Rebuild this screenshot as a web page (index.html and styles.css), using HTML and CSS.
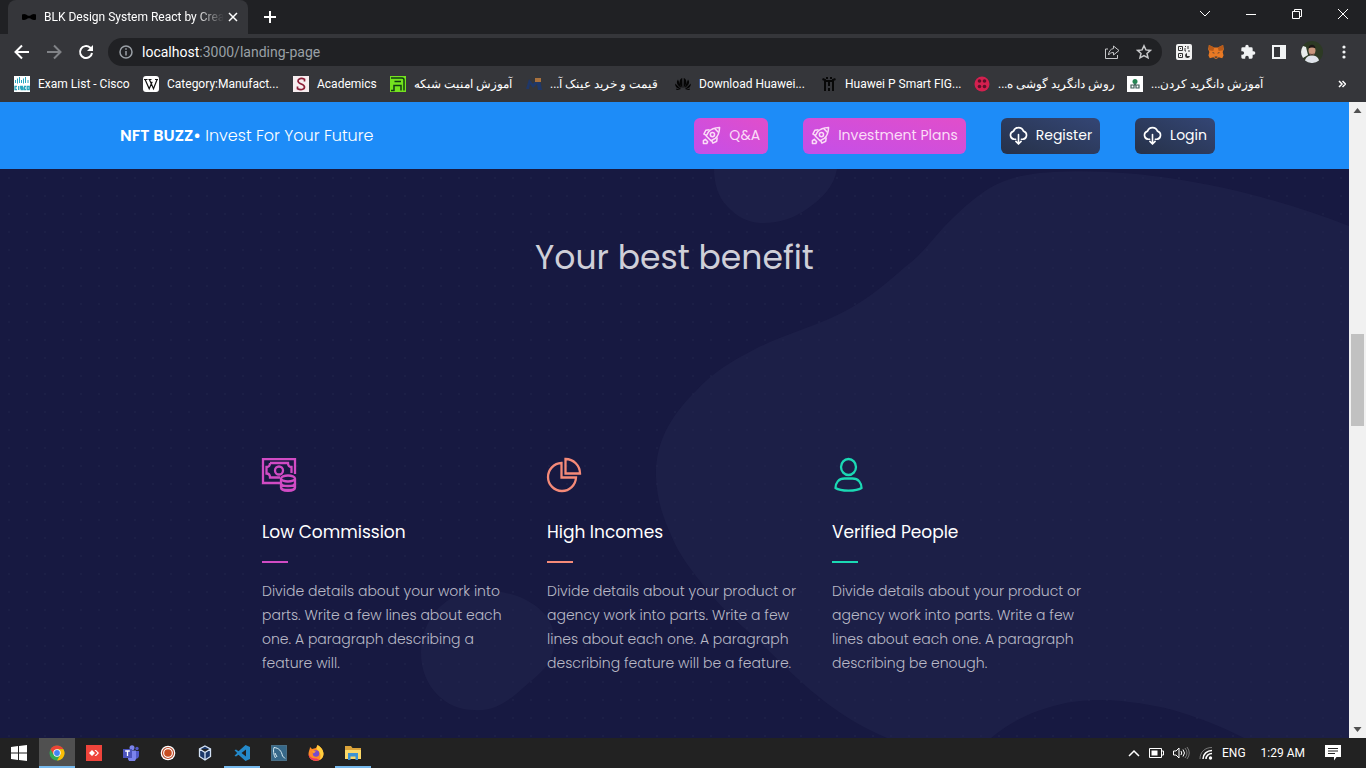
FILE: index.html
```html
<!DOCTYPE html>
<html lang="en">
<head>
<meta charset="utf-8">
<title>BLK Design System React by Creative Tim</title>
<link rel="stylesheet" href="styles.css">
</head>
<body>
<svg class="defs" aria-hidden="true">
  <symbol id="spaceship" viewBox="0 0 20 20"><g fill="none" stroke="currentColor" stroke-width="1.6" stroke-linejoin="round"><path d="M18.500 1.500C13 1.700 9.500 3 7 6L4.500 10.500l5 5L14 13c3-2.500 4.300-6 4.500-11.500z"/><path d="M8 4L4 4.500 2 8.500l3 1.500M16 12l-.5 4L11.500 18 10 15M13.500 2.800l3.700 3.700"/><circle cx="11" cy="9" r="2.200"/><path d="M1.500 15.500l2-1.500 2.500 2.500-1 2H1.500z"/></g></symbol>
  <symbol id="cloud" viewBox="0 0 20 20"><g fill="none" stroke="currentColor" stroke-width="1.700" stroke-linecap="round" stroke-linejoin="round"><path d="M7 14H5.300a4.400 4.400 0 0 1-.5-8.600 5.500 5.500 0 0 1 10.400 0 4.400 4.400 0 0 1-.5 8.600H13M10 9V19M7.300 16.200L10 19l2.700-2.800"/></g></symbol>
</svg>

<header class="browser">
  <div class="tabstrip">
    <div class="tab">
      <svg class="bow" viewBox="0 0 14 8"><path d="M0 1.500Q3 0 6 2.800H8Q11 0 14 1.500V6.500Q11 8 8 5.200H6Q3 8 0 6.500Z"/></svg>
      <span class="tab-title">BLK Design System React by Crea</span>
      <button class="plain" aria-label="Close tab"><svg width="10" height="10" viewBox="0 0 10 10"><path class="ln15" d="M1 1l8 8M9 1L1 9"/></svg></button>
    </div>
    <button class="plain new-tab" aria-label="New tab"><svg width="12" height="12" viewBox="0 0 12 12"><path class="ln2" d="M6 0v12M0 6h12"/></svg></button>
    <div class="window-buttons">
      <button class="plain" aria-label="Search tabs"><svg width="12" height="12" viewBox="0 0 12 12"><path class="ln" d="M1 3l5 5 5-5"/></svg></button>
      <button class="plain" aria-label="Minimize"><svg width="12" height="12" viewBox="0 0 12 12"><path class="ln" d="M1 6.500h10"/></svg></button>
      <button class="plain" aria-label="Restore"><svg width="12" height="12" viewBox="0 0 12 12"><path class="ln" d="M1.500 3.500h7v7h-7zM3.500 3.500v-2h7v7h-2"/></svg></button>
      <button class="plain" aria-label="Close"><svg width="12" height="12" viewBox="0 0 12 12"><path class="ln" d="M1 1l10 10M11 1L1 11"/></svg></button>
    </div>
  </div>

  <div class="toolbar">
    <button class="plain" aria-label="Back"><svg width="16" height="16" viewBox="0 0 16 16"><path class="ln2" d="M15 8H2M8 1.500L1.500 8 8 14.500"/></svg></button>
    <button class="plain dim" aria-label="Forward"><svg width="16" height="16" viewBox="0 0 16 16"><path class="ln2" d="M1 8h13M8 1.500L14.500 8 8 14.500"/></svg></button>
    <button class="plain" aria-label="Reload"><svg width="16" height="16" viewBox="0 0 16 16"><path class="ln2" d="M14 9a6 6 0 1 1-2-5.500L14 5.500"/><path fill="currentColor" d="M15 1v6H9z"/></svg></button>
    <div class="omnibox">
      <svg class="info" width="14" height="14" viewBox="0 0 14 14"><circle class="ln15" cx="7" cy="7" r="6"/><path class="ln15" d="M7 6v4.500M7 3.200v1.500"/></svg>
      <span class="url"><b>localhost</b>:3000/landing-page</span>
      <button class="plain soft" aria-label="Share"><svg width="16" height="16" viewBox="0 0 16 16"><path class="ln" d="M4 5H1.500v9.500h12V11M9.500 2l5.500 4.500L9.500 11V8.500C7 8.500 5.500 9.500 4.500 11 4.700 7.500 6.500 5 9.500 4.500z"/></svg></button>
      <button class="plain soft" aria-label="Bookmark"><svg width="16" height="16" viewBox="0 0 16 16"><path class="ln15" d="M8 1.800l1.900 4.100 4.500.5-3.400 3 1 4.400L8 11.500l-4 2.300 1-4.400-3.400-3 4.500-.5z"/></svg></button>
    </div>
    <div class="extensions">
      <svg width="16" height="16" viewBox="0 0 16 16"><rect width="16" height="16" rx="2" fill="#f1f1f1"/><path fill="none" stroke="#333" d="M2.500 2.500h4v4h-4zM2.500 9.500h4v4h-4zM9 2.500h1M12 2v3M9 4v3h1M12 7h2"/><path fill="#333" d="M4 4h1v1H4zM4 11h1v1H4zM11 9a2.500 2.500 0 1 0 3 3h-3z"/></svg>
      <svg width="16" height="16" viewBox="0 0 18 16"><path fill="#e87924" d="M1 0l6 3h4l6-3 .8 5-1.300 3 1 4-1.500 3-4-1-2 1.500H8L6 14l-4 1-1.500-3 1-4L.2 5z"/><path fill="#b85a18" d="M1 0l6 3-1 4-5-1zM17 0l-6 3 1 4 5-1z"/><path fill="#30363b" d="M5 8l3 1.500H5.500zM13 8l-3 1.500h2.500zM7.500 13h3v1.500h-3z"/></svg>
      <svg width="16" height="16" viewBox="0 0 24 24"><path fill="currentColor" d="M20.500 11H19V7a2 2 0 0 0-2-2h-4V3.500a2.500 2.500 0 0 0-5 0V5H4a2 2 0 0 0-2 2v3.800h1.500a2.700 2.700 0 0 1 0 5.400H2V20a2 2 0 0 0 2 2h3.800v-1.500a2.700 2.700 0 0 1 5.400 0V22H17a2 2 0 0 0 2-2v-4h1.500a2.500 2.500 0 0 0 0-5z"/></svg>
      <svg width="14" height="14" viewBox="0 0 14 14"><path fill="currentColor" fill-rule="evenodd" d="M0 0h14v14H0zM2 2v10h6V2z"/></svg>
      <svg class="avatar" width="22" height="22" viewBox="0 0 22 22"><circle cx="11" cy="11" r="11" fill="#2d3a24"/><path fill="#e8eceb" d="M2 5a11 11 0 0 0 0 12l5-3-2-8z"/><path fill="#dfe3ea" d="M4 19.500c1-4 4-5 7-5s6 1 7 5a11 11 0 0 1-14 0z"/><ellipse cx="11" cy="9.500" rx="3.500" ry="4.800" fill="#c9967d"/><path fill="#1c1715" d="M7.500 7.500c0-5 7-5 7 0-2-1.500-5-1.500-7 0z"/><path fill="#5c4238" d="M8.500 12.500c1.500.6 3.500.6 5 0-.5 2.200-4.500 2.200-5 0z"/></svg>
      <svg width="4" height="14" viewBox="0 0 4 14"><g fill="currentColor"><circle cx="2" cy="2" r="1.600"/><circle cx="2" cy="7" r="1.600"/><circle cx="2" cy="12" r="1.600"/></g></svg>
    </div>
  </div>

  <nav class="bookmarks" aria-label="Bookmarks">
    <a href="#"><svg viewBox="0 0 16 16"><path fill="#fff" d="M0 0h16v16H0z"/><path stroke="#27a5bd" d="M1.500 4v3M3.500 2.500v5M5.500 1v6M7.500 4v3M9.500 2.500v5M11.500 1v6M14 4v3"/><path fill="none" stroke="#27a5bd" stroke-width="1.300" d="M3 10.500H1v3h2M4.700 10v4M9 10.500H6.700V12H9v1.500H6.500M12 10.500h-1.500v3H12M13.200 10.500h2v3h-2z"/></svg><span>Exam List - Cisco</span></a>
    <a href="#"><svg viewBox="0 0 16 16"><rect width="16" height="16" rx="3" fill="#fff"/><path fill="none" stroke="#111" stroke-width="1.200" d="M2.200 3.700l4 9 3-7M6.500 3.700l4 9 3.500-9M1 3.500h3.500M5.500 3.500h3M12 3.500h3"/></svg><span>Category:Manufact...</span></a>
    <a href="#"><svg viewBox="0 0 16 16"><path fill="#f7edef" d="M0 0h16v16H0z"/><path fill="none" stroke="#8c1d35" stroke-width="1.700" d="M11.500 5.500V3.200C8.500 1.800 5 2.500 5 5c0 3.500 6.500 2.500 6.500 6 0 2.800-4 3.200-7 1.800V10.500"/></svg><span>Academics</span></a>
    <a href="#"><svg viewBox="0 0 16 16"><path fill="#74e31f" d="M0 0h16v16H0z"/><path fill="none" stroke="#103c13" stroke-width="1.500" d="M1 2h11q2 0 2 2v10.500M1 14.500h3V9.500h7v5M4.500 5.500H11"/></svg><span dir="rtl">آموزش امنیت شبکه</span></a>
    <a href="#"><svg viewBox="0 0 16 16"><path fill="#1f3768" d="M0 13L3 3l4 5 4-5h3l2 11h-4l-1-6-4 4-3-4-1 5z"/><path fill="#a8713d" d="M9 2h6v4H9z"/></svg><span dir="rtl">قیمت و خرید عینک آ...</span></a>
    <a href="#"><svg viewBox="0 0 16 16"><g fill="#050505"><path d="M7.500 12C3 7 4.500 3 7.200 2zM8.500 12C13 7 11.500 3 8.800 2zM6.500 12C1.500 9 1 6 3 3.500zM9.500 12c5-3 5.500-6 3.500-8.500zM6 13C2 13 0 10.500.2 7.500zM10 13c4 0 6-2.500 5.800-5.500zM6 14H1.500L1 12.500zM10 14h4.500l.5-1.500z"/></g></svg><span>Download Huawei...</span></a>
    <a href="#"><svg viewBox="0 0 16 16"><path fill="none" stroke="#080808" stroke-width="2" d="M4 15V4L1.500 3M12 15V4l2.500-1M4 5h8M8 5v5M8 12v3M6 1v2M10 1v2"/></svg><span>Huawei P Smart FIG...</span></a>
    <a href="#"><svg viewBox="0 0 16 16"><circle cx="8" cy="8" r="7.500" fill="#d3204f"/><g fill="#5c1029"><circle cx="5.500" cy="5" r="1.800"/><circle cx="10.500" cy="5" r="1.800"/><circle cx="5.500" cy="10.500" r="1.800"/><circle cx="10.500" cy="10.500" r="1.800"/></g></svg><span dir="rtl">روش دانگرید گوشی ه...</span></a>
    <a href="#"><svg viewBox="0 0 16 16"><path fill="#fff" d="M0 0h16v16H0z"/><circle cx="8" cy="5.500" r="2.500" fill="#258653"/><path fill="none" stroke="#3f5f58" stroke-width="1.200" d="M4 9v3h3V9.500L8 8l1 1.500V12h3V9z"/></svg><span dir="rtl">آموزش دانگرید کردن...</span></a>
    <button class="plain more" aria-label="More bookmarks"><svg width="8" height="8" viewBox="0 0 8 8"><path class="ln15" d="M1 1l3 3-3 3M4.500 1l3 3-3 3"/></svg></button>
  </nav>
</header>

<div class="viewport">
  <div class="page">
    <header class="navbar">
      <a class="brand" href="#"><b>NFT BUZZ•</b> Invest For Your Future</a>
      <nav class="nav-links" aria-label="Main">
        <a class="btn btn-pink" href="#"><svg><use href="#spaceship"/></svg>Q&amp;A</a>
        <a class="btn btn-pink" href="#"><svg><use href="#spaceship"/></svg>Investment Plans</a>
        <a class="btn btn-dark" href="#"><svg><use href="#cloud"/></svg>Register</a>
        <a class="btn btn-dark" href="#"><svg><use href="#cloud"/></svg>Login</a>
      </nav>
    </header>

    <main class="section">
      <svg class="blobs" viewBox="0 0 1349 569" preserveAspectRatio="xMidYMid slice" aria-hidden="true">
        <path d="M1349 57C1260 22 1150 -2 1053 3C1020 5 1002 11 985 22C964 37 950 51 936 67C925 80 917 89 905 98C880 120 860 136 831 149C805 160 782 167 757 179C730 193 712 204 696 222C667 250 655 278 656 308C657 330 662 346 671 366C680 388 692 402 708 422C728 447 748 461 770 483C807 520 838 548 887 569H991C1008 555 1024 546 1047 539C1072 531 1097 530 1121 532C1148 535 1165 538 1189 546C1210 553 1226 560 1244 569H1349Z"/>
        <path d="M714 0C714 14 718 28 727 37C737 48 747 53 760 54C778 55 794 49 807 40C823 29 834 17 837 0Z"/>
        <path d="M421 484C421 451 445 422 480 421C520 421 551 440 554 466C557 494 540 504 523 519C508 533 492 543 474 541C446 541 421 518 421 484Z"/>
      </svg>
      <h1>Your best benefit</h1>
      <div class="features">
        <article class="feature pink">
          <svg class="feature-icon" viewBox="0 0 34 34"><path d="M18 25H1V1.200h32V16M12 19.500h6M8 5h18c0 2.500 1 4 3.500 4v6M8 5c0 2.500-1 4-3.500 4v6.500c2.500 0 3.500 1.500 3.500 4h4"/><circle cx="17" cy="12.500" r="4"/><ellipse cx="26" cy="20.500" rx="7" ry="3"/><path d="M19 20.500v9.300c0 4 14 4 14 0v-9.300M19 25c0 4 14 4 14 0M19 29c0 4 14 4 14 0"/></svg>
          <h2>Low Commission</h2><hr>
          <p>Divide details about your work into parts. Write a few lines about each one. A paragraph describing a feature will.</p>
        </article>
        <article class="feature orange">
          <svg class="feature-icon" viewBox="0 0 34 34"><path d="M14.500 5v14.500H29A14 14 0 1 1 14.500 5z"/><path d="M18.500 1v14.500H33A14.500 14.500 0 0 0 18.500 1z"/></svg>
          <h2>High Incomes</h2><hr>
          <p>Divide details about your product or agency work into parts. Write a few lines about each one. A paragraph describing feature will be a feature.</p>
        </article>
        <article class="feature green">
          <svg class="feature-icon" viewBox="0 0 34 34"><ellipse cx="16.500" cy="9" rx="7.500" ry="8"/><path d="M12.500 20.500h8c6 0 9 4.500 9 9.500-5 3.500-21 3.500-26 0 0-5 3-9.500 9-9.500z"/></svg>
          <h2>Verified People</h2><hr>
          <p>Divide details about your product or agency work into parts. Write a few lines about each one. A paragraph describing be enough.</p>
        </article>
      </div>
    </main>
  </div>
  <div class="scrollbar" aria-hidden="true">
    <svg viewBox="0 0 17 17"><path d="M4.500 11h8l-4-5z"/></svg>
    <div class="thumb"></div>
    <svg class="down" viewBox="0 0 17 17"><path d="M4.500 6h8l-4 5z"/></svg>
  </div>
</div>

<footer class="taskbar">
  <div class="apps">
    <button class="app start" aria-label="Start"><svg viewBox="0 0 16 16"><path fill="#fff" d="M0 2l7-1v6.500H0zM8 .9L16 0v7.500H8zM0 8.500h7V15l-7-1zM8 8.500h8V16l-8-1z"/></svg></button>
    <button class="app active running" aria-label="Chrome"><svg viewBox="0 0 16 16"><circle cx="8" cy="8" r="7.500" fill="#34a853"/><path fill="#ea4335" d="M1.500 4.250A7.500 7.500 0 0 1 14.500 4.250H8L4.500 9.500z"/><path fill="#fbbc05" d="M14.500 4.250A7.500 7.500 0 0 1 8 15.500l3.500-6L8 4.250z"/><circle cx="8" cy="8" r="3.700" fill="#fff"/><circle cx="8" cy="8" r="2.900" fill="#4285f4"/></svg></button>
    <button class="app" aria-label="AnyDesk"><svg viewBox="0 0 16 16"><path fill="#ef443b" d="M0 0h16v16H0z"/><path fill="#fff" d="M6 5l3 3-3 3-3-3zM8.500 5h1.500l3 3-3 3H8.500l3-3z"/></svg></button>
    <button class="app" aria-label="Teams"><svg viewBox="0 0 16 16"><circle cx="9" cy="2.700" r="2.500" fill="#7b83eb"/><circle cx="14" cy="3.500" r="1.700" fill="#5059c9"/><path fill="#5059c9" d="M11 6h5v5a3 3 0 0 1-5 2z"/><path fill="#7b83eb" d="M5 5.500h8V12a4 4 0 0 1-8 2z"/><path fill="#4b53bc" d="M0 4h9v9H0z"/><path stroke="#fff" stroke-width="1.300" d="M2.200 6h4.600M4.500 6v5"/></svg></button>
    <button class="app" aria-label="Screen recorder"><svg viewBox="0 0 16 16"><circle cx="8" cy="8" r="7.300" fill="#fff"/><circle cx="8" cy="8" r="5.500" fill="#fff" stroke="#b8492a" stroke-width="1.200"/><circle cx="8" cy="8" r="3.800" fill="#c64c20"/></svg></button>
    <button class="app" aria-label="VirtualBox"><svg viewBox="0 0 16 16"><path fill="#1a3768" stroke="#d3e2f5" stroke-width="1.300" d="M8 1l5.500 3v7.500L8 15l-5.500-3.500V4zM2.500 4L8 7.500 13.500 4M8 7.500V15"/></svg></button>
    <button class="app running" aria-label="Visual Studio Code"><svg viewBox="0 0 16 16"><path fill="#2489ca" fill-rule="evenodd" d="M11.500 0L16 2v12l-4.500 2L4.500 9.700 2 11.600.5 10.700 3.200 8 .5 5.300 2 4.400l2.500 1.900zM12 4.500L7.500 8l4.500 3.500z"/></svg></button>
    <button class="app" aria-label="MySQL Workbench"><svg viewBox="0 0 16 16"><path fill="#366889" stroke="#6690a8" stroke-width=".6" d="M.3.3h15.400v15.400H.3z"/><path fill="none" stroke="#d9edf4" d="M4.500 13C2.500 10 2 5 3 2.500 8 3 10.500 6 11.500 11l2.500 2.500M4 8l2 4"/></svg></button>
    <button class="app" aria-label="Firefox"><svg viewBox="0 0 16 16"><path fill="#ff8a24" d="M2 2l2 2 4-1L9.500 0c3 2 6 4.500 6 9a7.500 7 0 0 1-15 0C.5 6 2 4.500 2 2z"/><path fill="#ffcf3e" d="M9.500 0c3 2 6 4.500 6 9 0 3-2 5-4 6 2-4 1-8-3-11z"/><path fill="#ef3564" d="M.5 9c1 3 4 5 8 4.500l3 1.500A7.500 7 0 0 1 .5 9z"/><circle cx="8" cy="8.500" r="3.200" fill="#754bce"/><path fill="#ff9f2d" d="M4 5.500l4 1-2.500 2z"/></svg></button>
    <button class="app running" aria-label="File Explorer"><svg viewBox="0 0 16 16"><path fill="#dca43a" d="M0 1h6l1.500 2H16v11H0z"/><path fill="#fbd867" d="M0 5h16v9H0z"/><path fill="#3c93d2" d="M3 8h10v7h-2.500v-3.500h-5V15H3z"/></svg></button>
  </div>
  <div class="tray">
    <svg width="12" height="12" viewBox="0 0 12 12"><path class="ln15" d="M1 9l5-5 5 5"/></svg>
    <svg width="15" height="10" viewBox="0 0 15 10"><path class="ln" d="M.5.500h12v9H.5zM13 3h1.500v4H13"/><path fill="currentColor" d="M2.500 2.500h6v5h-6z"/></svg>
    <svg width="17" height="14" viewBox="0 0 17 14"><path class="ln" d="M.5 5h2.500l3-3v10L3 9H.5zM8 5q1.500 2 0 4"/><path class="ln" d="M10 3.500q3 3.500 0 7"/><path class="ln faint" d="M12 2q4 5 0 10M14 1q4.500 6 0 12"/></svg>
    <svg width="14" height="14" viewBox="0 0 14 14"><path class="ln faint" d="M1 13C1 6 6 1.500 13 1.500"/><path class="ln15" d="M4 13c0-5 4-8.500 9-8.500M7 13c0-3 2.500-5.500 6-5.500"/><circle cx="11.500" cy="12" r="1.700" fill="currentColor"/></svg>
    <span>ENG</span>
    <time>1:29 AM</time>
    <svg class="notice" width="16" height="16" viewBox="0 0 16 16"><path fill="currentColor" d="M0 0h16v12h-4.500L9 15.500V12H0z"/><path stroke="#222" d="M3 3.500h10M3 6h10M3 8.500h7"/></svg>
  </div>
</footer>
</body>
</html>
```

FILE: styles.css
```css
* { box-sizing: border-box; }

body {
  margin: 0;
  min-height: 100vh;
  display: flex;
  flex-direction: column;
  background: #171941;
  color: #fff;
  font-family: "Segoe UI", Roboto, "Noto Sans", sans-serif;
  font-size: 12px;
}

a { color: inherit; text-decoration: none; }
svg { display: block; flex: none; }
.defs { position: absolute; width: 0; height: 0; }

.plain {
  display: flex;
  align-items: center;
  justify-content: center;
  padding: 0;
  border: 0;
  background: none;
  color: inherit;
}

.ln, .ln15, .ln2 { fill: none; stroke: currentColor; stroke-width: 1; }
.ln15 { stroke-width: 1.5; }
.ln2 { stroke-width: 2; }
.faint { opacity: .4; }
.dim { color: #818387; }
.soft { color: #c7c8ca; }

/* Browser window */
.browser { background: #35363a; }

.tabstrip {
  display: flex;
  height: 34px;
  padding-left: 8px;
  background: #202124;
}
.tab {
  display: flex;
  align-items: center;
  gap: 8px;
  width: 240px;
  padding: 0 11px 0 14px;
  border-radius: 8px 8px 0 0;
  background: #35363a;
}
.tab .plain { margin-left: -4px; }
.bow { width: 14px; height: 8px; fill: #000; }
.tab-title {
  white-space: nowrap;
  mask-image: linear-gradient(90deg, #000 84%, transparent);
}
.new-tab { width: 44px; }
.window-buttons { display: flex; margin-left: auto; }
.window-buttons .plain { width: 46px; height: 28px; }

.toolbar {
  display: flex;
  align-items: center;
  gap: 16px;
  height: 36px;
  padding: 0 20px 0 14px;
}
.omnibox {
  flex: 1;
  display: flex;
  align-items: center;
  gap: 16px;
  height: 28px;
  margin-left: -2px;
  padding: 0 10px 0 11px;
  border-radius: 14px;
  background: #202124;
}
.info { color: #9aa0a6; }
.url { flex: 1; margin-left: -7px; font-size: 14px; color: #9aa0a6; }
.url b { font-weight: 400; color: #fff; }
.extensions { display: flex; align-items: center; gap: 16px; margin-left: -2px; color: #f1f3f4; }
.extensions svg:last-child { margin-left: 4px; }
.avatar { margin: 0 -1px; }

.bookmarks {
  display: grid;
  grid-template-columns: 129fr 150fr 97fr 136fr 149fr 146fr 153fr 153fr 205fr 20fr;
  align-items: center;
  height: 32px;
  padding: 0 14px 4px;
}
.bookmarks a { display: flex; align-items: center; gap: 8px; white-space: nowrap; }
.bookmarks svg { width: 16px; height: 16px; }
.bookmarks .more svg { width: 8px; height: 8px; }

/* Scrolled web page */
.viewport { flex: 1; display: flex; }
.page {
  flex: 1;
  display: flex;
  flex-direction: column;
  font-family: Poppins, Inter, sans-serif;
}

.navbar {
  display: flex;
  align-items: center;
  justify-content: space-between;
  min-height: 67px;
  padding: 0 134px 0 120px;
  background: #1d8cf8;
}
.brand { font-size: 16px; font-weight: 300; }
.brand b { font-weight: 600; }
.nav-links { display: flex; gap: 35px; }
.btn {
  display: flex;
  align-items: center;
  gap: 8px;
  height: 36px;
  padding: 0 8px;
  border-radius: 6px;
  font-size: 14px;
}
.btn svg { width: 19px; height: 19px; }
.btn-pink { color: #fbdcf7; background: linear-gradient(to bottom left, #e14eca, #c44fe9); }
.btn-dark { background: linear-gradient(to bottom left, #344675, #263148); }

.section {
  position: relative;
  flex: 1;
  padding: 65px 16px 48px;
  background: radial-gradient(circle at 9px 9px, #1c1f46 1px, transparent 1px) 0 0 / 18px 18px, #171941;
}
.blobs {
  position: absolute;
  inset: 0;
  width: 100%;
  height: 100%;
  fill: #252850;
  fill-opacity: .4;
}
.section h1 {
  position: relative;
  margin: 0 0 176px;
  text-align: center;
  font-size: 33px;
  font-weight: 400;
  line-height: 48px;
  color: #cfcfd8;
}
.features {
  position: relative;
  display: grid;
  grid-template-columns: repeat(3, 1fr);
  max-width: 855px;
  margin: 0 auto;
}
.feature { padding: 0 0 0 15px; }
.feature-icon { width: 34px; height: 34px; fill: none; stroke: currentColor; stroke-width: 2.3; overflow: visible; }
.feature h2 {
  margin: 27px 0 16px;
  font-size: 17px;
  font-weight: 400;
  line-height: 26px;
  color: #fff;
}
.feature hr { width: 26px; height: 2px; margin: 0 0 16px; border: 0; background: currentColor; color: inherit; }
.feature p {
  max-width: 256px;
  margin: 0;
  font-size: 14px;
  font-weight: 300;
  line-height: 24px;
  color: #b9b9c6;
}
.pink { color: #d14bc4; }
.orange { color: #f58a78; }
.green { color: #1bd9b4; }

.scrollbar {
  display: grid;
  grid-template-rows: 17px 215fr 92fr 295fr 17px;
  width: 17px;
  background: #f1f1f1;
  fill: #505050;
}
.thumb { grid-row: 3; margin: 0 2px; background: #c1c1c1; }
.down { grid-row: 5; }

/* Desktop taskbar */
.taskbar {
  flex: none;
  display: flex;
  justify-content: space-between;
  height: 30px;
  background: #222;
}
.apps { display: flex; gap: 1px; }
.app {
  display: flex;
  align-items: center;
  justify-content: center;
  width: 36px;
  padding: 0;
  border: 0;
  background: none;
}
.start { width: 38px; }
.app svg { width: 16px; height: 16px; }
.running { box-shadow: inset 0 -2px #76b9ed; }
.active { background: #505050; }
.tray { display: flex; align-items: center; gap: 9px; padding-right: 25px; }
.tray time { margin-left: 6px; }
.notice { margin-left: 11px; }
```
